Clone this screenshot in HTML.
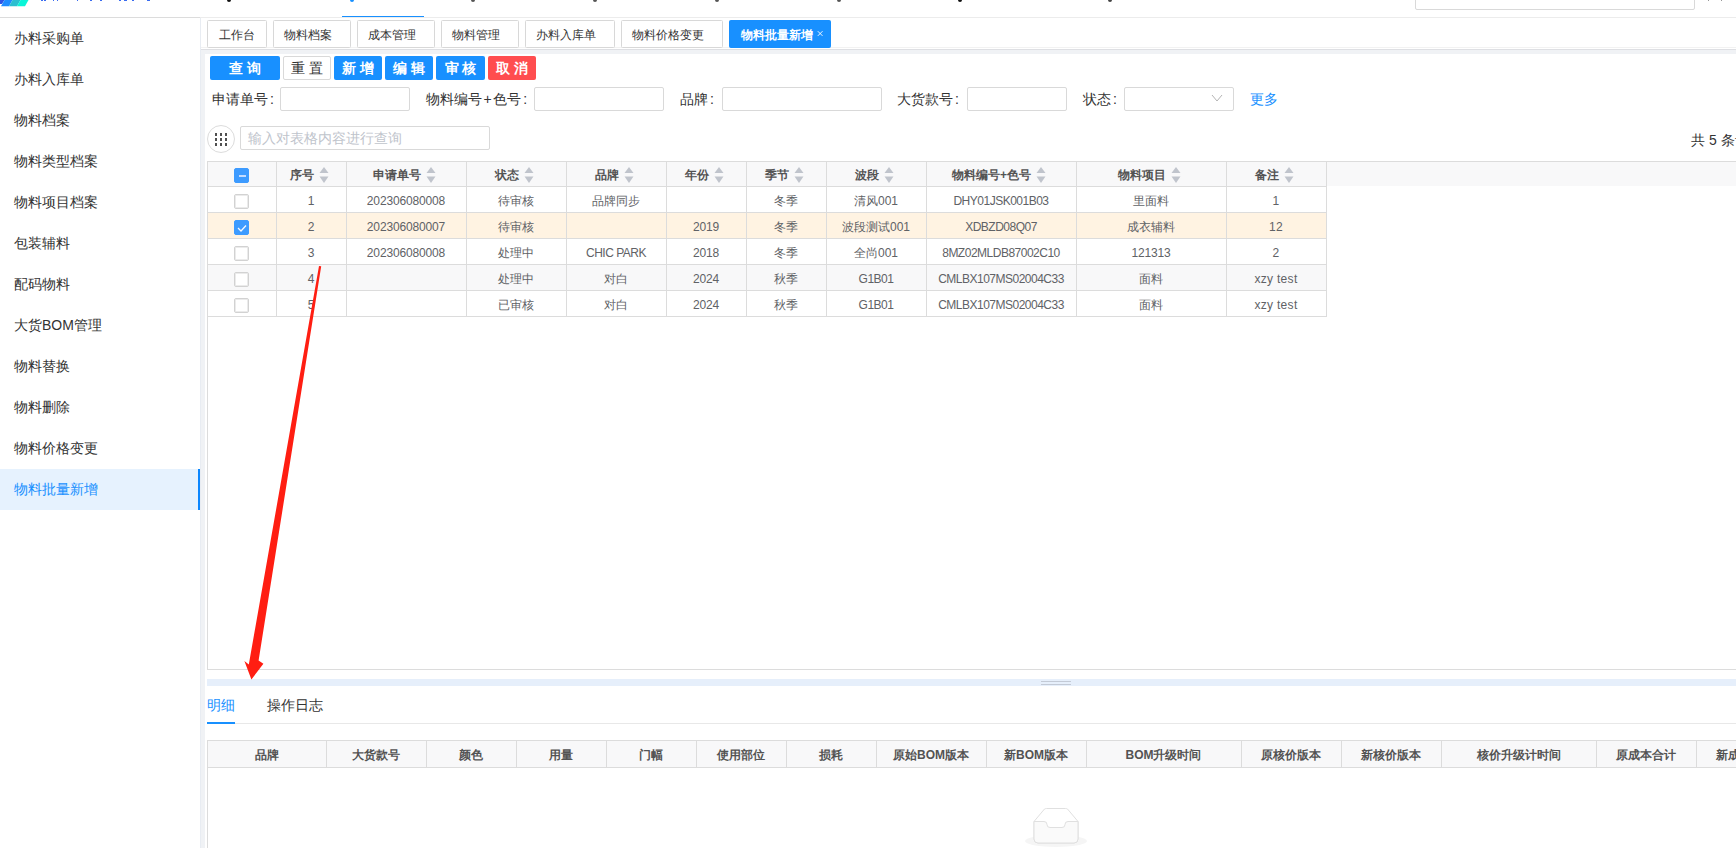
<!DOCTYPE html>
<html><head><meta charset="utf-8">
<style>
*{box-sizing:border-box;margin:0;padding:0}
html,body{width:1736px;height:848px;overflow:hidden;background:#fff;font-family:"Liberation Sans",sans-serif;color:#333}
div,span{position:absolute}
.side{left:0;width:200px;height:41px;font-size:14px;line-height:41px;padding-left:14px;color:#333;white-space:nowrap}
.tab{top:20px;height:28px;border:1px solid #d8d8d8;border-radius:1.5px;font-size:12px;line-height:28px;padding-left:10px;color:#333;background:#fff;white-space:nowrap}
.btn{top:56px;height:24px;border-radius:2px;font-size:14px;font-weight:bold;line-height:24px;text-align:center;color:#fff;background:#1890ff;white-space:pre}
.lbl{top:90px;font-size:14px;line-height:18px;color:#333;white-space:nowrap}
.inp{top:87px;height:24px;border:1px solid #d9d9d9;border-radius:2px;background:#fff}
.th{font-size:12px;font-weight:bold;color:#535353;line-height:25px;white-space:nowrap;display:flex;justify-content:center;align-items:center;padding-right:4px;padding-top:2px}
.td{font-size:12px;color:#606266;text-align:center;line-height:26px;white-space:nowrap}
.lat{letter-spacing:-0.5px}
.dig{letter-spacing:-0.15px}
.td[style*="1226px"]{letter-spacing:0.3px}
.sort{position:relative;display:inline-block;width:9px;height:14px;margin-left:5px}
.cb{width:15px;height:15px;border:1px solid #d2d2d2;border-radius:2px;background:#fff;box-shadow:inset 0 0 0 1px #ebebeb}
.dth{font-size:12px;font-weight:bold;color:#535353;line-height:28px;text-align:center;white-space:nowrap}
</style></head><body>

<svg style="position:absolute;left:0;top:0" width="30" height="8"><polygon points="0,0 4.5,0 2,4 0,4" fill="#2e55e6"/><polygon points="4.5,0 12.5,0 9,6.2 1,6.2" fill="#1e8cff"/><polygon points="12.5,0 20.5,0 17,6.2 9,6.2" fill="#2bbfd0"/><polygon points="20.5,0 28.5,0 25,6.2 17,6.2" fill="#0af5d8"/></svg>
<div style="left:41px;top:0;width:2px;height:1px;background:#3a6cf0"></div>
<div style="left:44px;top:0;width:2px;height:1px;background:#3a6cf0"></div>
<div style="left:53px;top:0;width:1px;height:1px;background:#3a6cf0"></div>
<div style="left:57px;top:0;width:1px;height:1px;background:#3a6cf0"></div>
<div style="left:77px;top:0;width:1px;height:1px;background:#3a6cf0"></div>
<div style="left:90px;top:0;width:2px;height:1px;background:#3a6cf0"></div>
<div style="left:100px;top:0;width:2px;height:1px;background:#3a6cf0"></div>
<div style="left:119px;top:0;width:2px;height:1px;background:#3a6cf0"></div>
<div style="left:124px;top:0;width:3px;height:1px;background:#3a6cf0"></div>
<div style="left:132px;top:0;width:2px;height:1px;background:#3a6cf0"></div>
<div style="left:147px;top:0;width:3px;height:1px;background:#3a6cf0"></div>
<div style="left:227px;top:0;width:4px;height:2px;background:#111;border-radius:0 0 2px 2px"></div>
<div style="left:350px;top:0;width:4px;height:2px;background:#1890ff;border-radius:0 0 2px 2px"></div>
<div style="left:471px;top:0;width:4px;height:2px;background:#555;border-radius:0 0 2px 2px"></div>
<div style="left:593px;top:0;width:4px;height:2px;background:#555;border-radius:0 0 2px 2px"></div>
<div style="left:715px;top:0;width:4px;height:2px;background:#555;border-radius:0 0 2px 2px"></div>
<div style="left:837px;top:0;width:4px;height:2px;background:#555;border-radius:0 0 2px 2px"></div>
<div style="left:958px;top:0;width:4px;height:2px;background:#111;border-radius:0 0 2px 2px"></div>
<div style="left:1108px;top:0;width:4px;height:2px;background:#444;border-radius:0 0 2px 2px"></div>
<div style="left:342px;top:16px;width:82px;height:2px;background:#1890ff"></div>
<div style="left:1415px;top:-10px;width:280px;height:20px;border:1px solid #d9d9d9;border-radius:2px"></div>
<div style="left:1708px;top:0;width:1px;height:1px;background:#999"></div><div style="left:1721px;top:0;width:1px;height:1px;background:#999"></div>
<div style="left:0;top:17px;width:200px;height:1px;background:#dcdcdc"></div>
<div style="left:200px;top:17px;width:1536px;height:1px;background:#ececec"></div>
<div class="side" style="top:18px">办料采购单</div>
<div class="side" style="top:59px">办料入库单</div>
<div class="side" style="top:100px">物料档案</div>
<div class="side" style="top:141px">物料类型档案</div>
<div class="side" style="top:182px">物料项目档案</div>
<div class="side" style="top:223px">包装辅料</div>
<div class="side" style="top:264px">配码物料</div>
<div class="side" style="top:305px">大货BOM管理</div>
<div class="side" style="top:346px">物料替换</div>
<div class="side" style="top:387px">物料删除</div>
<div class="side" style="top:428px">物料价格变更</div>
<div class="side" style="top:469px;background:#e6f2fe;color:#1890ff;border-right:2px solid #0a86fe">物料批量新增</div>
<div style="left:200px;top:50px;width:5px;height:798px;background:#f0f2f5"></div>
<div style="left:200px;top:18px;width:1px;height:830px;background:#e8ecf2"></div>
<div style="left:205px;top:18px;width:1531px;height:31px;background:#fff"></div>
<div style="left:201px;top:47px;width:1535px;height:1px;background:#f2f2f2"></div>
<div class="tab" style="left:207px;width:60px;padding-left:11px">工作台</div>
<div class="tab" style="left:273px;width:78px;padding-left:10px">物料档案</div>
<div class="tab" style="left:357px;width:78px;padding-left:10px">成本管理</div>
<div class="tab" style="left:441px;width:78px;padding-left:10px">物料管理</div>
<div class="tab" style="left:525px;width:90px;padding-left:10px">办料入库单</div>
<div class="tab" style="left:621px;width:102px;padding-left:10px">物料价格变更</div>
<div class="tab" style="left:729px;width:102px;background:#1890ff;border-color:#1890ff;color:#fff;padding-left:11px;font-weight:bold">物料批量新增<svg style="position:absolute;left:86px;top:9px" width="8" height="8"><path d="M1.8 1.2 L6.5 5.9 M6.5 1.2 L1.8 5.9" stroke="#fff" stroke-width="0.9" fill="none"/></svg></div>
<div style="left:201px;top:49px;width:1535px;height:1px;background:#dedfe3"></div>
<div style="left:201px;top:50px;width:1535px;height:4px;background:#f0f2f5"></div>
<div class="btn" style="left:210px;width:70px;background:#1890ff;color:#fff;">查 询</div>
<div class="btn" style="left:283px;width:48px;background:#fff;color:#333;border:1px solid #d9d9d9;line-height:22px;font-weight:normal;">重 置</div>
<div class="btn" style="left:334px;width:48px;background:#1890ff;color:#fff;">新 增</div>
<div class="btn" style="left:385px;width:48px;background:#1890ff;color:#fff;">编 辑</div>
<div class="btn" style="left:436px;width:49px;background:#1890ff;color:#fff;">审 核</div>
<div class="btn" style="left:488px;width:48px;background:#ff4d4f;color:#fff;">取 消</div>
<div class="lbl" style="left:212px">申请单号<span style="position:relative;margin-left:2px">:</span></div>
<div class="inp" style="left:280px;width:130px"></div>
<div class="lbl" style="left:426px">物料编号<span style="position:relative;margin:0 1.5px">+</span>色号<span style="position:relative;margin-left:2px">:</span></div>
<div class="inp" style="left:534px;width:130px"></div>
<div class="lbl" style="left:680px">品牌<span style="position:relative;margin-left:2px">:</span></div>
<div class="inp" style="left:722px;width:160px"></div>
<div class="lbl" style="left:897px">大货款号<span style="position:relative;margin-left:2px">:</span></div>
<div class="inp" style="left:967px;width:100px"></div>
<div class="lbl" style="left:1083px">状态<span style="position:relative;margin-left:2px">:</span></div>
<div class="inp" style="left:1124px;width:110px"></div>
<svg style="position:absolute;left:1211px;top:94px" width="12" height="9"><polyline points="1,1 6,7 11,1" fill="none" stroke="#b4b4b4" stroke-width="1"/></svg>
<div class="lbl" style="left:1250px;color:#1890ff">更多</div>
<div style="left:207px;top:125px;width:28px;height:28px;border:1px solid #dcdcdc;border-radius:50%"></div>
<div style="left:215px;top:133px;width:2px;height:3px;background:#505050"></div>
<div style="left:215px;top:138px;width:2px;height:3px;background:#505050"></div>
<div style="left:215px;top:143px;width:2px;height:3px;background:#505050"></div>
<div style="left:220px;top:133px;width:2px;height:3px;background:#505050"></div>
<div style="left:220px;top:138px;width:2px;height:3px;background:#505050"></div>
<div style="left:220px;top:143px;width:2px;height:3px;background:#505050"></div>
<div style="left:225px;top:133px;width:2px;height:3px;background:#505050"></div>
<div style="left:225px;top:138px;width:2px;height:3px;background:#505050"></div>
<div style="left:225px;top:143px;width:2px;height:3px;background:#505050"></div>
<div style="left:240px;top:126px;width:250px;height:24px;border:1px solid #d9d9d9;border-radius:2px"></div>
<div style="left:248px;top:129px;font-size:14px;line-height:18px;color:#c0c4cc;white-space:nowrap">输入对表格内容进行查询</div>
<div style="left:1691px;top:131px;font-size:14px;line-height:18px;color:#333;white-space:nowrap">共 5 条记录</div>
<div style="left:207px;top:161px;width:1540px;height:509px;border:1px solid #dcdcdc"></div>
<div style="left:208px;top:162px;width:1528px;height:24px;background:#f8f8f9"></div>
<div style="left:208px;top:187px;width:1118px;height:25px;background:#fff"></div>
<div style="left:208px;top:213px;width:1118px;height:25px;background:#fff3e2"></div>
<div style="left:208px;top:239px;width:1118px;height:25px;background:#fff"></div>
<div style="left:208px;top:265px;width:1118px;height:25px;background:#f8f8f9"></div>
<div style="left:208px;top:291px;width:1118px;height:25px;background:#fff"></div>
<div style="left:208px;top:186px;width:1119px;height:1px;background:#dcdcdc"></div>
<div style="left:208px;top:212px;width:1119px;height:1px;background:#dcdcdc"></div>
<div style="left:208px;top:238px;width:1119px;height:1px;background:#dcdcdc"></div>
<div style="left:208px;top:264px;width:1119px;height:1px;background:#dcdcdc"></div>
<div style="left:208px;top:290px;width:1119px;height:1px;background:#dcdcdc"></div>
<div style="left:208px;top:316px;width:1119px;height:1px;background:#dcdcdc"></div>
<div style="left:276px;top:162px;width:1px;height:154px;background:#dcdcdc"></div>
<div style="left:346px;top:162px;width:1px;height:154px;background:#dcdcdc"></div>
<div style="left:466px;top:162px;width:1px;height:154px;background:#dcdcdc"></div>
<div style="left:566px;top:162px;width:1px;height:154px;background:#dcdcdc"></div>
<div style="left:666px;top:162px;width:1px;height:154px;background:#dcdcdc"></div>
<div style="left:746px;top:162px;width:1px;height:154px;background:#dcdcdc"></div>
<div style="left:826px;top:162px;width:1px;height:154px;background:#dcdcdc"></div>
<div style="left:926px;top:162px;width:1px;height:154px;background:#dcdcdc"></div>
<div style="left:1076px;top:162px;width:1px;height:154px;background:#dcdcdc"></div>
<div style="left:1226px;top:162px;width:1px;height:154px;background:#dcdcdc"></div>
<div style="left:1326px;top:162px;width:1px;height:154px;background:#dcdcdc"></div>
<div class="th" style="left:276px;top:162px;width:70px;height:24px">序号<svg width="10" height="17" style="position:relative;margin-left:5px;top:0px"><polygon points="5,0 9.5,6 0.5,6" fill="#c0c4cc"/><polygon points="0.5,9.5 9.5,9.5 5,16" fill="#c0c4cc"/></svg></div>
<div class="th" style="left:346px;top:162px;width:120px;height:24px">申请单号<svg width="10" height="17" style="position:relative;margin-left:5px;top:0px"><polygon points="5,0 9.5,6 0.5,6" fill="#c0c4cc"/><polygon points="0.5,9.5 9.5,9.5 5,16" fill="#c0c4cc"/></svg></div>
<div class="th" style="left:466px;top:162px;width:100px;height:24px">状态<svg width="10" height="17" style="position:relative;margin-left:5px;top:0px"><polygon points="5,0 9.5,6 0.5,6" fill="#c0c4cc"/><polygon points="0.5,9.5 9.5,9.5 5,16" fill="#c0c4cc"/></svg></div>
<div class="th" style="left:566px;top:162px;width:100px;height:24px">品牌<svg width="10" height="17" style="position:relative;margin-left:5px;top:0px"><polygon points="5,0 9.5,6 0.5,6" fill="#c0c4cc"/><polygon points="0.5,9.5 9.5,9.5 5,16" fill="#c0c4cc"/></svg></div>
<div class="th" style="left:666px;top:162px;width:80px;height:24px">年份<svg width="10" height="17" style="position:relative;margin-left:5px;top:0px"><polygon points="5,0 9.5,6 0.5,6" fill="#c0c4cc"/><polygon points="0.5,9.5 9.5,9.5 5,16" fill="#c0c4cc"/></svg></div>
<div class="th" style="left:746px;top:162px;width:80px;height:24px">季节<svg width="10" height="17" style="position:relative;margin-left:5px;top:0px"><polygon points="5,0 9.5,6 0.5,6" fill="#c0c4cc"/><polygon points="0.5,9.5 9.5,9.5 5,16" fill="#c0c4cc"/></svg></div>
<div class="th" style="left:826px;top:162px;width:100px;height:24px">波段<svg width="10" height="17" style="position:relative;margin-left:5px;top:0px"><polygon points="5,0 9.5,6 0.5,6" fill="#c0c4cc"/><polygon points="0.5,9.5 9.5,9.5 5,16" fill="#c0c4cc"/></svg></div>
<div class="th" style="left:926px;top:162px;width:150px;height:24px">物料编号+色号<svg width="10" height="17" style="position:relative;margin-left:5px;top:0px"><polygon points="5,0 9.5,6 0.5,6" fill="#c0c4cc"/><polygon points="0.5,9.5 9.5,9.5 5,16" fill="#c0c4cc"/></svg></div>
<div class="th" style="left:1076px;top:162px;width:150px;height:24px">物料项目<svg width="10" height="17" style="position:relative;margin-left:5px;top:0px"><polygon points="5,0 9.5,6 0.5,6" fill="#c0c4cc"/><polygon points="0.5,9.5 9.5,9.5 5,16" fill="#c0c4cc"/></svg></div>
<div class="th" style="left:1226px;top:162px;width:100px;height:24px">备注<svg width="10" height="17" style="position:relative;margin-left:5px;top:0px"><polygon points="5,0 9.5,6 0.5,6" fill="#c0c4cc"/><polygon points="0.5,9.5 9.5,9.5 5,16" fill="#c0c4cc"/></svg></div>
<div class="cb" style="left:234px;top:168px;background:#3d9bff;border-color:#3d9bff;box-shadow:none"><span style="left:3.5px;top:5.5px;width:7px;height:2.5px;background:#c4dcff"></span></div>
<div class="cb" style="left:234px;top:194px"></div>
<div class="td dig" style="left:276px;top:188px;width:70px;height:26px">1</div>
<div class="td dig" style="left:346px;top:188px;width:120px;height:26px">202306080008</div>
<div class="td" style="left:466px;top:188px;width:100px;height:26px">待审核</div>
<div class="td" style="left:566px;top:188px;width:100px;height:26px">品牌同步</div>
<div class="td" style="left:666px;top:188px;width:80px;height:26px"></div>
<div class="td" style="left:746px;top:188px;width:80px;height:26px">冬季</div>
<div class="td" style="left:826px;top:188px;width:100px;height:26px">清风001</div>
<div class="td lat" style="left:926px;top:188px;width:150px;height:26px">DHY01JSK001B03</div>
<div class="td" style="left:1076px;top:188px;width:150px;height:26px">里面料</div>
<div class="td dig" style="left:1226px;top:188px;width:100px;height:26px">1</div>
<div class="cb" style="left:234px;top:220px;background:#3d9bff;border-color:#3d9bff;box-shadow:none"><svg style="position:absolute;left:2px;top:3px" width="10" height="8"><polyline points="1,4 4,7 9,1.5" fill="none" stroke="#f4f8ff" stroke-width="1.3"/></svg></div>
<div class="td dig" style="left:276px;top:214px;width:70px;height:26px">2</div>
<div class="td dig" style="left:346px;top:214px;width:120px;height:26px">202306080007</div>
<div class="td" style="left:466px;top:214px;width:100px;height:26px">待审核</div>
<div class="td" style="left:566px;top:214px;width:100px;height:26px"></div>
<div class="td dig" style="left:666px;top:214px;width:80px;height:26px">2019</div>
<div class="td" style="left:746px;top:214px;width:80px;height:26px">冬季</div>
<div class="td" style="left:826px;top:214px;width:100px;height:26px">波段测试001</div>
<div class="td lat" style="left:926px;top:214px;width:150px;height:26px">XDBZD08Q07</div>
<div class="td" style="left:1076px;top:214px;width:150px;height:26px">成衣辅料</div>
<div class="td dig" style="left:1226px;top:214px;width:100px;height:26px">12</div>
<div class="cb" style="left:234px;top:246px"></div>
<div class="td dig" style="left:276px;top:240px;width:70px;height:26px">3</div>
<div class="td dig" style="left:346px;top:240px;width:120px;height:26px">202306080008</div>
<div class="td" style="left:466px;top:240px;width:100px;height:26px">处理中</div>
<div class="td lat" style="left:566px;top:240px;width:100px;height:26px">CHIC PARK</div>
<div class="td dig" style="left:666px;top:240px;width:80px;height:26px">2018</div>
<div class="td" style="left:746px;top:240px;width:80px;height:26px">冬季</div>
<div class="td" style="left:826px;top:240px;width:100px;height:26px">全尚001</div>
<div class="td lat" style="left:926px;top:240px;width:150px;height:26px">8MZ02MLDB87002C10</div>
<div class="td dig" style="left:1076px;top:240px;width:150px;height:26px">121313</div>
<div class="td dig" style="left:1226px;top:240px;width:100px;height:26px">2</div>
<div class="cb" style="left:234px;top:272px"></div>
<div class="td dig" style="left:276px;top:266px;width:70px;height:26px">4</div>
<div class="td" style="left:346px;top:266px;width:120px;height:26px"></div>
<div class="td" style="left:466px;top:266px;width:100px;height:26px">处理中</div>
<div class="td" style="left:566px;top:266px;width:100px;height:26px">对白</div>
<div class="td dig" style="left:666px;top:266px;width:80px;height:26px">2024</div>
<div class="td" style="left:746px;top:266px;width:80px;height:26px">秋季</div>
<div class="td lat" style="left:826px;top:266px;width:100px;height:26px">G1B01</div>
<div class="td lat" style="left:926px;top:266px;width:150px;height:26px">CMLBX107MS02004C33</div>
<div class="td" style="left:1076px;top:266px;width:150px;height:26px">面料</div>
<div class="td" style="left:1226px;top:266px;width:100px;height:26px">xzy test</div>
<div class="cb" style="left:234px;top:298px"></div>
<div class="td dig" style="left:276px;top:292px;width:70px;height:26px">5</div>
<div class="td" style="left:346px;top:292px;width:120px;height:26px"></div>
<div class="td" style="left:466px;top:292px;width:100px;height:26px">已审核</div>
<div class="td" style="left:566px;top:292px;width:100px;height:26px">对白</div>
<div class="td dig" style="left:666px;top:292px;width:80px;height:26px">2024</div>
<div class="td" style="left:746px;top:292px;width:80px;height:26px">秋季</div>
<div class="td lat" style="left:826px;top:292px;width:100px;height:26px">G1B01</div>
<div class="td lat" style="left:926px;top:292px;width:150px;height:26px">CMLBX107MS02004C33</div>
<div class="td" style="left:1076px;top:292px;width:150px;height:26px">面料</div>
<div class="td" style="left:1226px;top:292px;width:100px;height:26px">xzy test</div>
<div style="left:207px;top:679px;width:1529px;height:7px;background:#e6effb"></div>
<div style="left:1041px;top:681px;width:30px;height:1px;background:#c3cad6"></div>
<div style="left:1041px;top:684px;width:30px;height:1px;background:#c3cad6"></div>
<div style="left:207px;top:696px;font-size:14px;line-height:18px;color:#1890ff;white-space:nowrap">明细</div>
<div style="left:267px;top:696px;font-size:14px;line-height:18px;color:#333;white-space:nowrap">操作日志</div>
<div style="left:207px;top:723px;width:1529px;height:1px;background:#e8e8e8"></div>
<div style="left:207px;top:722px;width:28px;height:2px;background:#1890ff"></div>
<div style="left:207px;top:740px;width:1600px;height:120px;border:1px solid #dcdcdc"></div>
<div style="left:208px;top:741px;width:1528px;height:26px;background:#f8f8f9"></div>
<div style="left:208px;top:767px;width:1528px;height:1px;background:#dcdcdc"></div>
<div style="left:326px;top:741px;width:1px;height:26px;background:#dcdcdc"></div>
<div style="left:426px;top:741px;width:1px;height:26px;background:#dcdcdc"></div>
<div style="left:516px;top:741px;width:1px;height:26px;background:#dcdcdc"></div>
<div style="left:606px;top:741px;width:1px;height:26px;background:#dcdcdc"></div>
<div style="left:696px;top:741px;width:1px;height:26px;background:#dcdcdc"></div>
<div style="left:786px;top:741px;width:1px;height:26px;background:#dcdcdc"></div>
<div style="left:876px;top:741px;width:1px;height:26px;background:#dcdcdc"></div>
<div style="left:986px;top:741px;width:1px;height:26px;background:#dcdcdc"></div>
<div style="left:1086px;top:741px;width:1px;height:26px;background:#dcdcdc"></div>
<div style="left:1241px;top:741px;width:1px;height:26px;background:#dcdcdc"></div>
<div style="left:1341px;top:741px;width:1px;height:26px;background:#dcdcdc"></div>
<div style="left:1441px;top:741px;width:1px;height:26px;background:#dcdcdc"></div>
<div style="left:1596px;top:741px;width:1px;height:26px;background:#dcdcdc"></div>
<div style="left:1696px;top:741px;width:1px;height:26px;background:#dcdcdc"></div>
<div class="dth" style="left:207px;top:741px;width:119px;height:26px">品牌</div>
<div class="dth" style="left:326px;top:741px;width:100px;height:26px">大货款号</div>
<div class="dth" style="left:426px;top:741px;width:90px;height:26px">颜色</div>
<div class="dth" style="left:516px;top:741px;width:90px;height:26px">用量</div>
<div class="dth" style="left:606px;top:741px;width:90px;height:26px">门幅</div>
<div class="dth" style="left:696px;top:741px;width:90px;height:26px">使用部位</div>
<div class="dth" style="left:786px;top:741px;width:90px;height:26px">损耗</div>
<div class="dth" style="left:876px;top:741px;width:110px;height:26px">原始BOM版本</div>
<div class="dth" style="left:986px;top:741px;width:100px;height:26px">新BOM版本</div>
<div class="dth" style="left:1086px;top:741px;width:155px;height:26px">BOM升级时间</div>
<div class="dth" style="left:1241px;top:741px;width:100px;height:26px">原核价版本</div>
<div class="dth" style="left:1341px;top:741px;width:100px;height:26px">新核价版本</div>
<div class="dth" style="left:1441px;top:741px;width:155px;height:26px">核价升级计时间</div>
<div class="dth" style="left:1596px;top:741px;width:100px;height:26px">原成本合计</div>
<div class="dth" style="left:1696px;top:741px;width:100px;height:26px">新成本合计</div>
<svg style="position:absolute;left:1020px;top:800px" width="72" height="48" viewBox="0 0 72 48">
<ellipse cx="36" cy="41" rx="31" ry="6" fill="#f5f5f5"/>
<path d="M14 21.5 L24.5 9 Q25.5 8.5 26.5 8.5 L45.5 8.5 Q46.5 8.5 47.5 9 L58 21.5 L58 39 Q58 43 54 43 L18 43 Q14 43 14 39 Z" fill="#fff" stroke="#e0e0e0" stroke-width="1"/>
<path d="M14 21.5 L24 21.5 Q27 21.5 27 24.5 Q27 27.5 30 27.5 L42 27.5 Q45 27.5 45 24.5 Q45 21.5 48 21.5 L58 21.5 L58 39 Q58 43 54 43 L18 43 Q14 43 14 39 Z" fill="#fafafa" stroke="#e0e0e0" stroke-width="1"/>
</svg>
<svg style="position:absolute;left:0;top:0" width="1736" height="848">
<polygon points="319,266 321.2,266.2 258.6,660.5 263.4,663.8 251.4,679.5 244.4,661 248.8,664.4" fill="#ff1e12"/>
</svg>
</body></html>
